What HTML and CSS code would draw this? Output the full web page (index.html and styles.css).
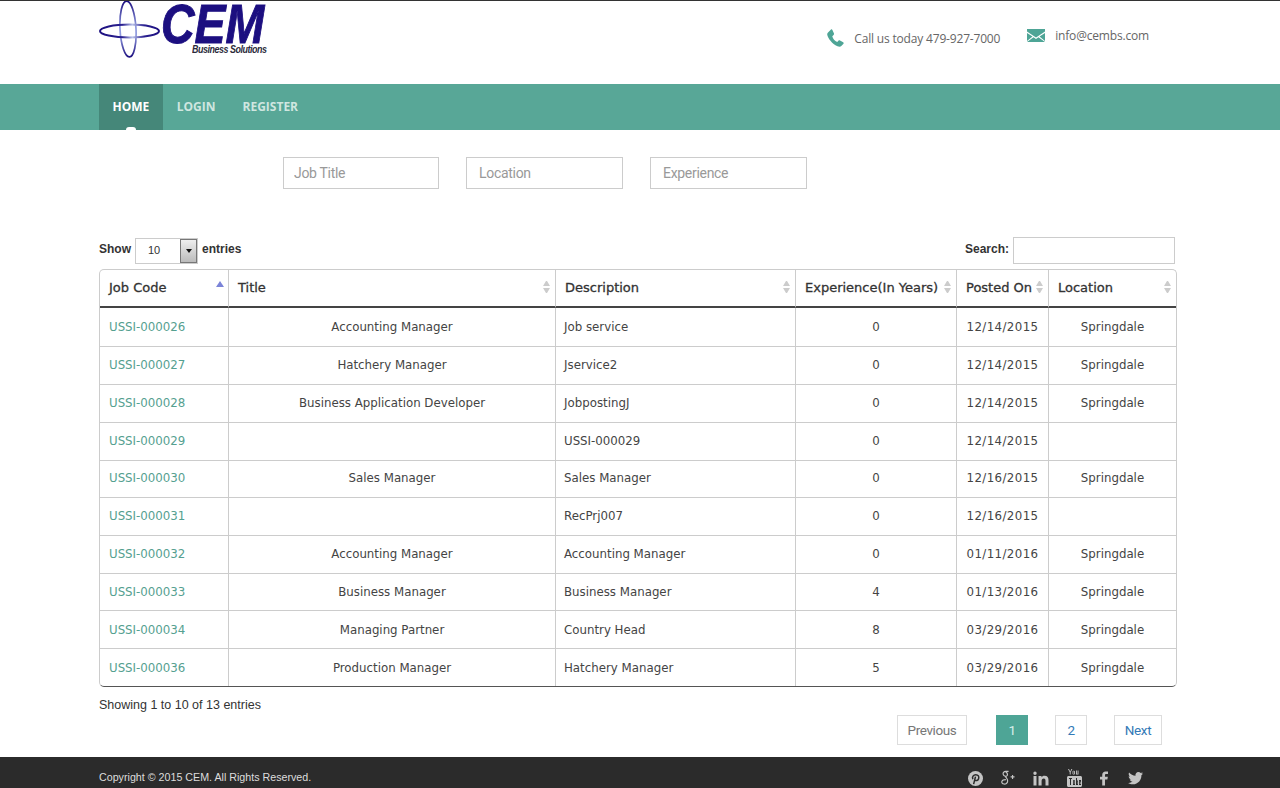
FILE: index.html
```html
<!DOCTYPE html>
<html>
<head>
    <title>CEM Business Solutions</title>
    <link rel="stylesheet" href="styles.css">
</head>
<body>
    <header class="top">
        <div class="logo">
            <svg class="logo-mark" width="64" height="58" viewBox="0 0 64 58">
                <defs>
                    <linearGradient id="ringH" x1="0" x2="1" y1="0" y2="0">
                        <stop offset="0" stop-color="#1c0f80"/>
                        <stop offset=".38" stop-color="#2a2090"/>
                        <stop offset=".55" stop-color="#b9c2ea"/>
                        <stop offset=".75" stop-color="#2a2090"/>
                        <stop offset="1" stop-color="#1c0f80"/>
                    </linearGradient>
                    <linearGradient id="ringV" x1="0" x2="0" y1="0" y2="1">
                        <stop offset="0" stop-color="#1c0f80"/>
                        <stop offset=".45" stop-color="#8f9ade"/>
                        <stop offset=".62" stop-color="#8f9ade"/>
                        <stop offset="1" stop-color="#1c0f80"/>
                    </linearGradient>
                </defs>
                <ellipse cx="29" cy="29" rx="8" ry="28" fill="none" stroke="url(#ringV)" stroke-width="1.700" transform="rotate(-3 29 29)"/>
                <ellipse cx="30.500" cy="31" rx="29.500" ry="6.500" fill="none" stroke="url(#ringH)" stroke-width="2"/>
            </svg>
            <div class="logo-text">
                <div class="logo-name">CEM</div>
                <div class="logo-sub">Business Solutions</div>
            </div>
        </div>
        <div class="contact">
            <div class="contact-item contact-phone">
                <svg width="17" height="18" viewBox="0 0 17 18"><path d="M1 3.5L4 .5C4.600 0 5 .2 5.400 1L7 4.500C7.200 5.200 7 5.500 6.600 6L5.300 7.200C5.800 9.800 7.800 12 10.200 13L11.600 11.600C12 11.200 12.500 11.100 13 11.400L16.200 13.300C16.800 13.700 16.900 14.200 16.500 14.700L14.300 17C13.500 17.800 12 17.800 10.500 17.200C5 15 .8 9 .2 5.500C.1 4.700 .4 4 1 3.500Z" fill="#4ea596"/></svg>
                <span>Call us today 479-927-7000</span>
            </div>
            <div class="contact-item contact-mail">
                <svg width="18" height="13" viewBox="0 0 18 13"><path d="M0 0H18V2.500L9 8.500L0 2.500ZM0 4L5.500 7.500L0 12ZM18 4V12L12.500 7.500ZM6.500 8.300L9 10L11.500 8.300L18 13H0Z" fill="#4ea596"/></svg>
                <span>info@cembs.com</span>
            </div>
        </div>
    </header>

    <nav class="nav">
        <a href="#" class="nav-link active">HOME</a>
        <a href="#" class="nav-link">LOGIN</a>
        <a href="#" class="nav-link">REGISTER</a>
    </nav>

    <div class="filters">
        <input type="text" placeholder="Job Title">
        <input type="text" placeholder="Location">
        <input type="text" placeholder="Experience">
    </div>

    <main class="content">
        <div class="table-tools">
            <div class="tool">
                <span class="tool-label">Show</span>
                <div class="fake-select">
                    <span class="fake-value">10</span>
                    <span class="fake-arrow"></span>
                </div>
                <span class="tool-label">entries</span>
            </div>
            <div class="tool">
                <span class="tool-label">Search:</span>
                <input type="text" class="search-box">
            </div>
        </div>

        <table class="jobs">
            <colgroup>
                <col class="c1"><col class="c2"><col class="c3"><col class="c4"><col class="c5"><col class="c6">
            </colgroup>
            <thead>
                <tr>
                    <th><div class="th-in">Job Code<span class="sort-up"></span></div></th>
                    <th><div class="th-in">Title<span class="sort"></span></div></th>
                    <th><div class="th-in">Description<span class="sort"></span></div></th>
                    <th><div class="th-in">Experience(In Years)<span class="sort"></span></div></th>
                    <th><div class="th-in">Posted On<span class="sort"></span></div></th>
                    <th><div class="th-in">Location<span class="sort"></span></div></th>
                </tr>
            </thead>
            <tbody>
                <tr class="row-tall"><td><a href="#">USSI-000026</a></td><td class="mid">Accounting Manager</td><td>Job service</td><td class="mid">0</td><td class="mid date">12/14/2015</td><td class="mid">Springdale</td></tr>
                <tr class="row-up"><td><a href="#">USSI-000027</a></td><td class="mid">Hatchery Manager</td><td>Jservice2</td><td class="mid">0</td><td class="mid date">12/14/2015</td><td class="mid">Springdale</td></tr>
                <tr class="row-up"><td><a href="#">USSI-000028</a></td><td class="mid">Business Application Developer</td><td>JobpostingJ</td><td class="mid">0</td><td class="mid date">12/14/2015</td><td class="mid">Springdale</td></tr>
                <tr class="row-up"><td><a href="#">USSI-000029</a></td><td class="mid"></td><td>USSI-000029</td><td class="mid">0</td><td class="mid date">12/14/2015</td><td class="mid"></td></tr>
                <tr class="row-short row-up"><td><a href="#">USSI-000030</a></td><td class="mid">Sales Manager</td><td>Sales Manager</td><td class="mid">0</td><td class="mid date">12/16/2015</td><td class="mid">Springdale</td></tr>
                <tr class="row-up"><td><a href="#">USSI-000031</a></td><td class="mid"></td><td>RecPrj007</td><td class="mid">0</td><td class="mid date">12/16/2015</td><td class="mid"></td></tr>
                <tr class="row-up"><td><a href="#">USSI-000032</a></td><td class="mid">Accounting Manager</td><td>Accounting Manager</td><td class="mid">0</td><td class="mid date">01/11/2016</td><td class="mid">Springdale</td></tr>
                <tr class="row-short"><td><a href="#">USSI-000033</a></td><td class="mid">Business Manager</td><td>Business Manager</td><td class="mid">4</td><td class="mid date">01/13/2016</td><td class="mid">Springdale</td></tr>
                <tr><td><a href="#">USSI-000034</a></td><td class="mid">Managing Partner</td><td>Country Head</td><td class="mid">8</td><td class="mid date">03/29/2016</td><td class="mid">Springdale</td></tr>
                <tr class="row-short"><td><a href="#">USSI-000036</a></td><td class="mid">Production Manager</td><td>Hatchery Manager</td><td class="mid">5</td><td class="mid date">03/29/2016</td><td class="mid">Springdale</td></tr>
            </tbody>
        </table>

        <div class="info">Showing 1 to 10 of 13 entries</div>

        <div class="pages">
            <a href="#" class="page page-prev">Previous</a>
            <a href="#" class="page page-num current">1</a>
            <a href="#" class="page page-num">2</a>
            <a href="#" class="page page-next">Next</a>
        </div>
    </main>

    <footer class="footer">
        <div class="copyright">Copyright &copy; 2015 CEM. All Rights Reserved.</div>
        <div class="social">
            <svg width="15" height="15" viewBox="0 0 16 16"><circle cx="8" cy="8" r="8" fill="#c4c4c4"/><path d="M6 14L8 6M5.200 8.800C4 6.500 5.800 4 8.300 4C11 4 12 6 11.300 8.300C10.700 10.300 8.500 10.700 7.400 9.500" fill="none" stroke="#2b2b2b" stroke-width="1.600"/></svg>
            <svg width="16" height="18" viewBox="0 0 18 18"><path d="M8.500 1.500H5.500C3 1.500 2 3.200 2.500 5C3 6.800 5 7.300 6.300 6.800C7 6.500 7.500 5.500 7 4C6.500 2.500 5.800 2 5 1.800M5 7.500C6.500 9.500 7.500 10 7.500 12.500C7.500 15 5 16 3.500 15.800C1.500 15.500 .5 14.300 1 12.800C1.500 11.300 3.500 10.800 5.500 10.800M13 5.500V10M10.800 7.700H15.200" fill="none" stroke="#c4c4c4" stroke-width="1.300"/></svg>
            <svg class="icon-in" width="16" height="15" viewBox="0 0 16 15"><path d="M.5 5H3.500V14.500H.5ZM2 .5a1.700 1.700 0 1 1 0 3.400a1.700 1.700 0 0 1 0-3.400ZM5.500 5H8.500V6.300C9 5.400 10 4.800 11.500 4.800C14.500 4.800 15.500 6.500 15.500 9.500V14.500H12.500V10C12.500 8.500 12.200 7.400 10.800 7.400C9.300 7.400 8.600 8.400 8.600 10V14.500H5.500Z" fill="#c4c4c4"/></svg>
            <svg width="15" height="18" viewBox="0 0 15 18"><path d="M2 0L3.200 2.500L4.400 0H5.400L3.700 3.300V5.500H2.700V3.300L1 0ZM5.500 2.500C5.500 1.500 8 1.500 8 2.500V4.700C8 5.700 5.500 5.700 5.500 4.700ZM6.400 2.300V5H7.100V2.300ZM9 1.500H9.900V4.700H10.600V1.500H11.500V5.500H9Z" fill="#c4c4c4"/><path fill-rule="evenodd" d="M1.500 7H13.500C14.300 7 15 7.700 15 8.500V16.500C15 17.300 14.300 18 13.500 18H1.500C.7 18 0 17.300 0 16.500V8.500C0 7.700 .7 7 1.500 7ZM2 9V10H3V16H4V10H5V9ZM6 11V16H8V11H7.300V15H6.800V11ZM9 9V16H11V11.500H10V9ZM10 12.500H10.300V15H10V12.500ZM12 11V16H14V14.500H13.200V15H12.800V13.500H14V11ZM12.800 12H13.200V12.800H12.800Z" fill="#c4c4c4"/></svg>
            <svg width="8" height="15" viewBox="0 0 9 16"><path d="M2.500 16V9H0V6H2.500V4C2.500 1.500 4 0 6.300 0H9V3H7C6 3 5.600 3.400 5.600 4.300V6H8.800L8.300 9H5.600V16Z" fill="#c4c4c4"/></svg>
            <svg class="icon-tw" width="15" height="13" viewBox="0 0 15 13"><path d="M15 1.500C14.400 1.800 13.900 1.900 13.300 2C13.900 1.600 14.400 1 14.600 .3C14 .7 13.400 .9 12.700 1C12.100 .4 11.300 0 10.400 0C8.500 0 7.100 1.800 7.500 3.700C5 3.600 2.700 2.400 1.100 .5C.3 1.900 .7 3.700 2.100 4.700C1.600 4.700 1.100 4.500 .7 4.300C.6 5.800 1.700 7.100 3.100 7.400C2.600 7.500 2.200 7.600 1.700 7.500C2.100 8.700 3.200 9.600 4.600 9.600C3.300 10.700 1.600 11.100 0 10.900C1.400 11.800 3 12.300 4.700 12.300C10.400 12.300 13.600 7.500 13.400 3.200C14 2.800 14.600 2.200 15 1.500Z" fill="#c4c4c4"/></svg>
        </div>
    </footer>
</body>
</html>
```

FILE: styles.css
```css
* {
    box-sizing: border-box;
}

html, body {
    height: 100%;
}

body {
    margin: 0;
    border-top: 1px solid #333;
    background-color: #fff;
    font-family: "Liberation Sans", Arial, sans-serif;
    color: #333;
    display: flex;
    flex-direction: column;
    overflow: hidden;
}

/* header */
.top {
    height: 83px;
    padding-left: 99px;
    display: flex;
    flex-shrink: 0;
}

.logo {
    display: flex;
    height: 60px;
}

.logo-mark {
    margin-top: -1px;
}

.logo-name {
    font-size: 56px;
    line-height: 46px;
    height: 44px;
    font-weight: bold;
    font-style: italic;
    color: #1c0f80;
    -webkit-text-stroke: 1px #1c0f80;
    transform: scaleX(.83);
    transform-origin: left top;
    margin-left: -2px;
}

.logo-sub {
    font-size: 10px;
    line-height: 10px;
    font-style: italic;
    font-weight: bold;
    color: #2a2a3a;
    margin-left: 29px;
    letter-spacing: -.5px;
    white-space: nowrap;
    transform: scaleX(.89);
    transform-origin: left top;
}

.contact {
    margin-left: auto;
    padding-right: 131px;
    display: flex;
    font-family: "Open Sans", sans-serif;
    font-size: 12px;
    letter-spacing: -.18px;
    color: #666;
}

.contact-item {
    display: flex;
    gap: 10px;
}

.contact-phone {
    margin-top: 28px;
}

.contact-phone span {
    line-height: 19px;
}

.contact-mail {
    margin-top: 28px;
    margin-left: 27px;
}

.contact-mail span {
    line-height: 14px;
}

/* nav */
.nav {
    height: 46px;
    flex-shrink: 0;
    background-color: #58a797;
    padding-left: 99px;
    display: flex;
    font-family: "Open Sans", sans-serif;
    font-size: 12px;
    font-weight: bold;
}

.nav-link {
    color: #cfe6e0;
    text-decoration: none;
    padding: 0 13.500px;
    line-height: 45px;
}

.nav-link.active {
    position: relative;
    margin-right: .5px;
    background-color: #458779;
    color: #fff;
}

.nav-link.active::after {
    content: "";
    position: absolute;
    left: 50%;
    bottom: 0;
    margin-left: -5px;
    width: 10px;
    height: 3px;
    border-radius: 5px 5px 0 0;
    background-color: #fff;
}

/* filters */
.filters {
    padding: 27px 0 0 283px;
    display: flex;
    gap: 27px;
    flex-shrink: 0;
}

.filters input {
    width: 157px;
    height: 32px;
    padding: 0 12px;
    border: 1px solid #ccc;
    font-family: Roboto, sans-serif;
    font-size: 14px;
    letter-spacing: -.3px;
    color: #555;
}

.filters input:first-child {
    width: 156px;
    padding-left: 10px;
}

.filters input::placeholder {
    color: #999;
}

/* table */
.content {
    flex: 1;
    padding: 48px 103px 0 99px;
}

.table-tools {
    display: flex;
    justify-content: space-between;
    align-items: center;
    height: 27px;
    padding-right: 2px;
    margin-bottom: 5px;
}

.tool {
    display: flex;
    align-items: center;
    gap: 4px;
    font-size: 12px;
    font-weight: bold;
    color: #333;
}

.tool-label {
    margin-bottom: 3px;
}

.fake-select {
    width: 63px;
    height: 26px;
    margin-top: 1px;
    border: 1px solid #ccc;
    display: flex;
    align-items: stretch;
}

.fake-value {
    flex: 1;
    padding: 5px 0 0 12px;
    font-size: 11px;
    font-weight: normal;
}

.fake-arrow {
    width: 17px;
    border: 1px solid #777;
    background: linear-gradient(#eee, #bbb);
    display: flex;
    align-items: center;
    justify-content: center;
}

.fake-arrow::before {
    content: "";
    border-top: 4px solid #111;
    border-left: 3.500px solid transparent;
    border-right: 3.500px solid transparent;
}

.search-box {
    width: 162px;
    height: 27px;
    border: 1px solid #ccc;
}

.jobs {
    width: 1078px;
    table-layout: fixed;
    border-collapse: separate;
    border-spacing: 0;
    border: 1px solid #ccc;
    border-bottom: 1px solid #555;
    border-radius: 5px;
    font-family: "DejaVu Sans", sans-serif;
    font-size: 11.800px;
    color: #444;
}

.c1 { width: 128px; }
.c2 { width: 327px; }
.c3 { width: 240px; }
.c4 { width: 161px; }
.c5 { width: 92px; }

.jobs th {
    height: 38px;
    padding: 0 3px 2px 9px;
    text-align: left;
    font-weight: normal;
    font-size: 13px;
    color: #333;
    border-left: 1px solid #ccc;
    border-bottom: 2px solid #444;
    -webkit-text-stroke: .3px #333;
}

.jobs td {
    height: 38px;
    padding: 0 8px;
    border-left: 1px solid #ccc;
    border-bottom: 1px solid #ccc;
    white-space: nowrap;
}

.jobs .row-tall td {
    height: 39px;
}

.jobs .row-short td {
    height: 37px;
}

.jobs .row-up td {
    padding-bottom: 2px;
}

.jobs th:first-child, .jobs td:first-child {
    border-left: none;
    padding-left: 9px;
}

.jobs tr:last-child td {
    border-bottom: none;
}

.jobs td.mid {
    text-align: center;
}

.jobs td.date {
    letter-spacing: .4px;
}

.jobs a {
    color: #55a090;
    text-decoration: none;
}

.th-in {
    display: flex;
    justify-content: space-between;
    align-items: center;
    white-space: nowrap;
}

.sort {
    width: 7px;
    height: 12px;
    flex-shrink: 0;
    display: flex;
    flex-direction: column;
    justify-content: space-between;
    margin-right: 2px;
}

.sort::before, .sort::after {
    content: "";
    border-left: 3.500px solid transparent;
    border-right: 3.500px solid transparent;
}

.sort::before {
    border-bottom: 5px solid #ccc;
}

.sort::after {
    border-top: 5px solid #ccc;
}

.sort-up {
    border-left: 4px solid transparent;
    border-right: 4px solid transparent;
    border-bottom: 6px solid #7b84d8;
    margin: 0 1px 6px 0;
}

.info {
    font-size: 12.500px;
    margin-top: 11px;
    line-height: 14px;
}

.pages {
    display: flex;
    padding-left: 798px;
    margin-top: 3px;
    font-family: Roboto, sans-serif;
    font-size: 13.500px;
    letter-spacing: -.4px;
}

.page {
    height: 30px;
    line-height: 28px;
    border: 1px solid #ddd;
    text-align: center;
    text-decoration: none;
    color: #337ab7;
}

.page-prev {
    width: 70px;
    color: #777;
}

.page-num {
    width: 32px;
    margin-left: 27px;
}

.page-next {
    width: 48px;
    margin-left: 27px;
}

.page.current {
    margin-left: 29px;
    background-color: #4ea596;
    border-color: #4ea596;
    color: #d8efea;
}

/* footer */
.footer {
    height: 31px;
    flex-shrink: 0;
    background-color: #2b2b2b;
    padding: 0 137px 0 99px;
    display: flex;
    justify-content: space-between;
    align-items: center;
}

.copyright {
    font-size: 10.700px;
    color: #ddd;
    margin-top: 9px;
}

.social {
    display: flex;
    align-items: center;
    gap: 18px;
    margin-top: 11px;
}

.icon-in {
    margin-left: -2px;
}

.icon-tw {
    margin-left: 2px;
}
```
